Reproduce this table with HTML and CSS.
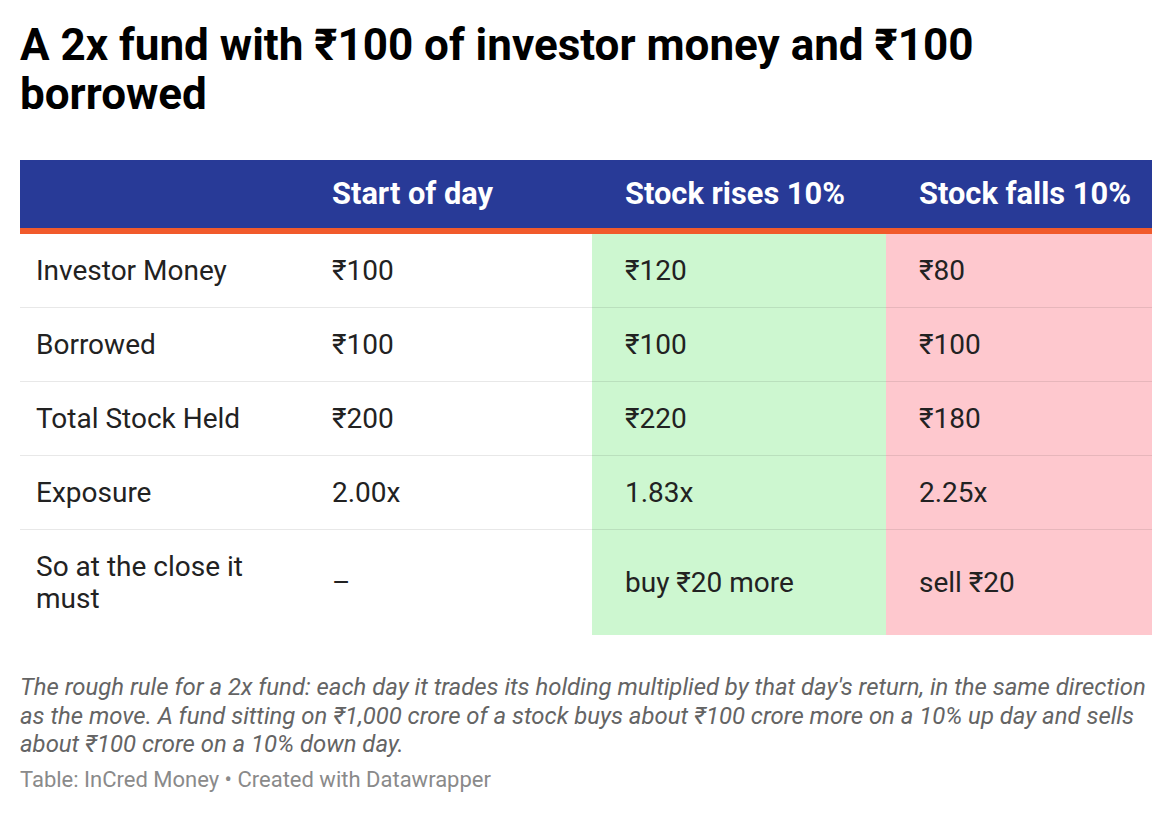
FILE: index.html
```html
<!DOCTYPE html>
<html lang="en">
<head>
<meta charset="utf-8">
<title>A 2x fund</title>
<link rel="stylesheet" href="styles.css">
</head>
<body>
<div class="chart">
  <h1 class="title">A 2x fund with ₹100 of investor money and ₹100 borrowed</h1>
  <div class="table">
    <div class="row head">
      <div class="cell c1"></div>
      <div class="cell c2">Start of day</div>
      <div class="cell c3">Stock rises 10%</div>
      <div class="cell c4">Stock falls 10%</div>
    </div>
    <div class="row">
      <div class="cell c1">Investor Money</div>
      <div class="cell c2">₹100</div>
      <div class="cell c3 up">₹120</div>
      <div class="cell c4 down">₹80</div>
    </div>
    <div class="row">
      <div class="cell c1">Borrowed</div>
      <div class="cell c2">₹100</div>
      <div class="cell c3 up">₹100</div>
      <div class="cell c4 down">₹100</div>
    </div>
    <div class="row">
      <div class="cell c1">Total Stock Held</div>
      <div class="cell c2">₹200</div>
      <div class="cell c3 up">₹220</div>
      <div class="cell c4 down">₹180</div>
    </div>
    <div class="row">
      <div class="cell c1">Exposure</div>
      <div class="cell c2">2.00x</div>
      <div class="cell c3 up">1.83x</div>
      <div class="cell c4 down">2.25x</div>
    </div>
    <div class="row last">
      <div class="cell c1">So at the close it must</div>
      <div class="cell c2">–</div>
      <div class="cell c3 up">buy ₹20 more</div>
      <div class="cell c4 down">sell ₹20</div>
    </div>
  </div>
  <p class="notes">The rough rule for a 2x fund: each day it trades its holding multiplied by that day's return, in the same direction as the move. A fund sitting on ₹1,000 crore of a stock buys about ₹100 crore more on a 10% up day and sells about ₹100 crore on a 10% down day.</p>
  <p class="footer">Table: InCred Money • Created with Datawrapper</p>
</div>
</body>
</html>
```

FILE: styles.css
```css
html, body {
  margin: 0;
  padding: 0;
  background: #ffffff;
}

body {
  font-family: Roboto, "Liberation Sans", sans-serif;
  color: #222222;
}

.chart {
  width: 1132px;
  padding: 21px 20px 0 20px;
}

.title {
  margin: 0;
  font-size: 44px;
  line-height: 49px;
  font-weight: 700;
  color: #000000;
}

.table {
  margin-top: 41px;
  display: flex;
  flex-direction: column;
}

.row {
  display: grid;
  grid-template-columns: 279px 293px 294px 266px;
  font-size: 28px;
  line-height: 32px;
}

.cell {
  padding: 21px 12px 20px 33px;
  border-bottom: 1px solid rgba(0, 0, 0, 0.09);
  display: flex;
  align-items: center;
}

.cell.c1 {
  padding-left: 16px;
}

.row.last .cell {
  border-bottom: none;
}

.row.head {
  background: #283a97;
  border-bottom: 6px solid #f15a2b;
  color: #ffffff;
  font-weight: 700;
  font-size: 30.8px;
}

.row.head .cell {
  padding-top: 18px;
  padding-bottom: 18px;
  padding-right: 0;
  border-bottom: none;
  white-space: nowrap;
}

.up {
  background: #cdf7d0;
}

.down {
  background: #fec8ce;
}

.notes {
  margin: 38px 0 0 0;
  font-size: 23.9px;
  line-height: 28.5px;
  font-style: italic;
  color: #646464;
}

.footer {
  margin: 7px 0 0 0;
  font-size: 22px;
  line-height: 28.5px;
  color: #8a8a8a;
}
```
